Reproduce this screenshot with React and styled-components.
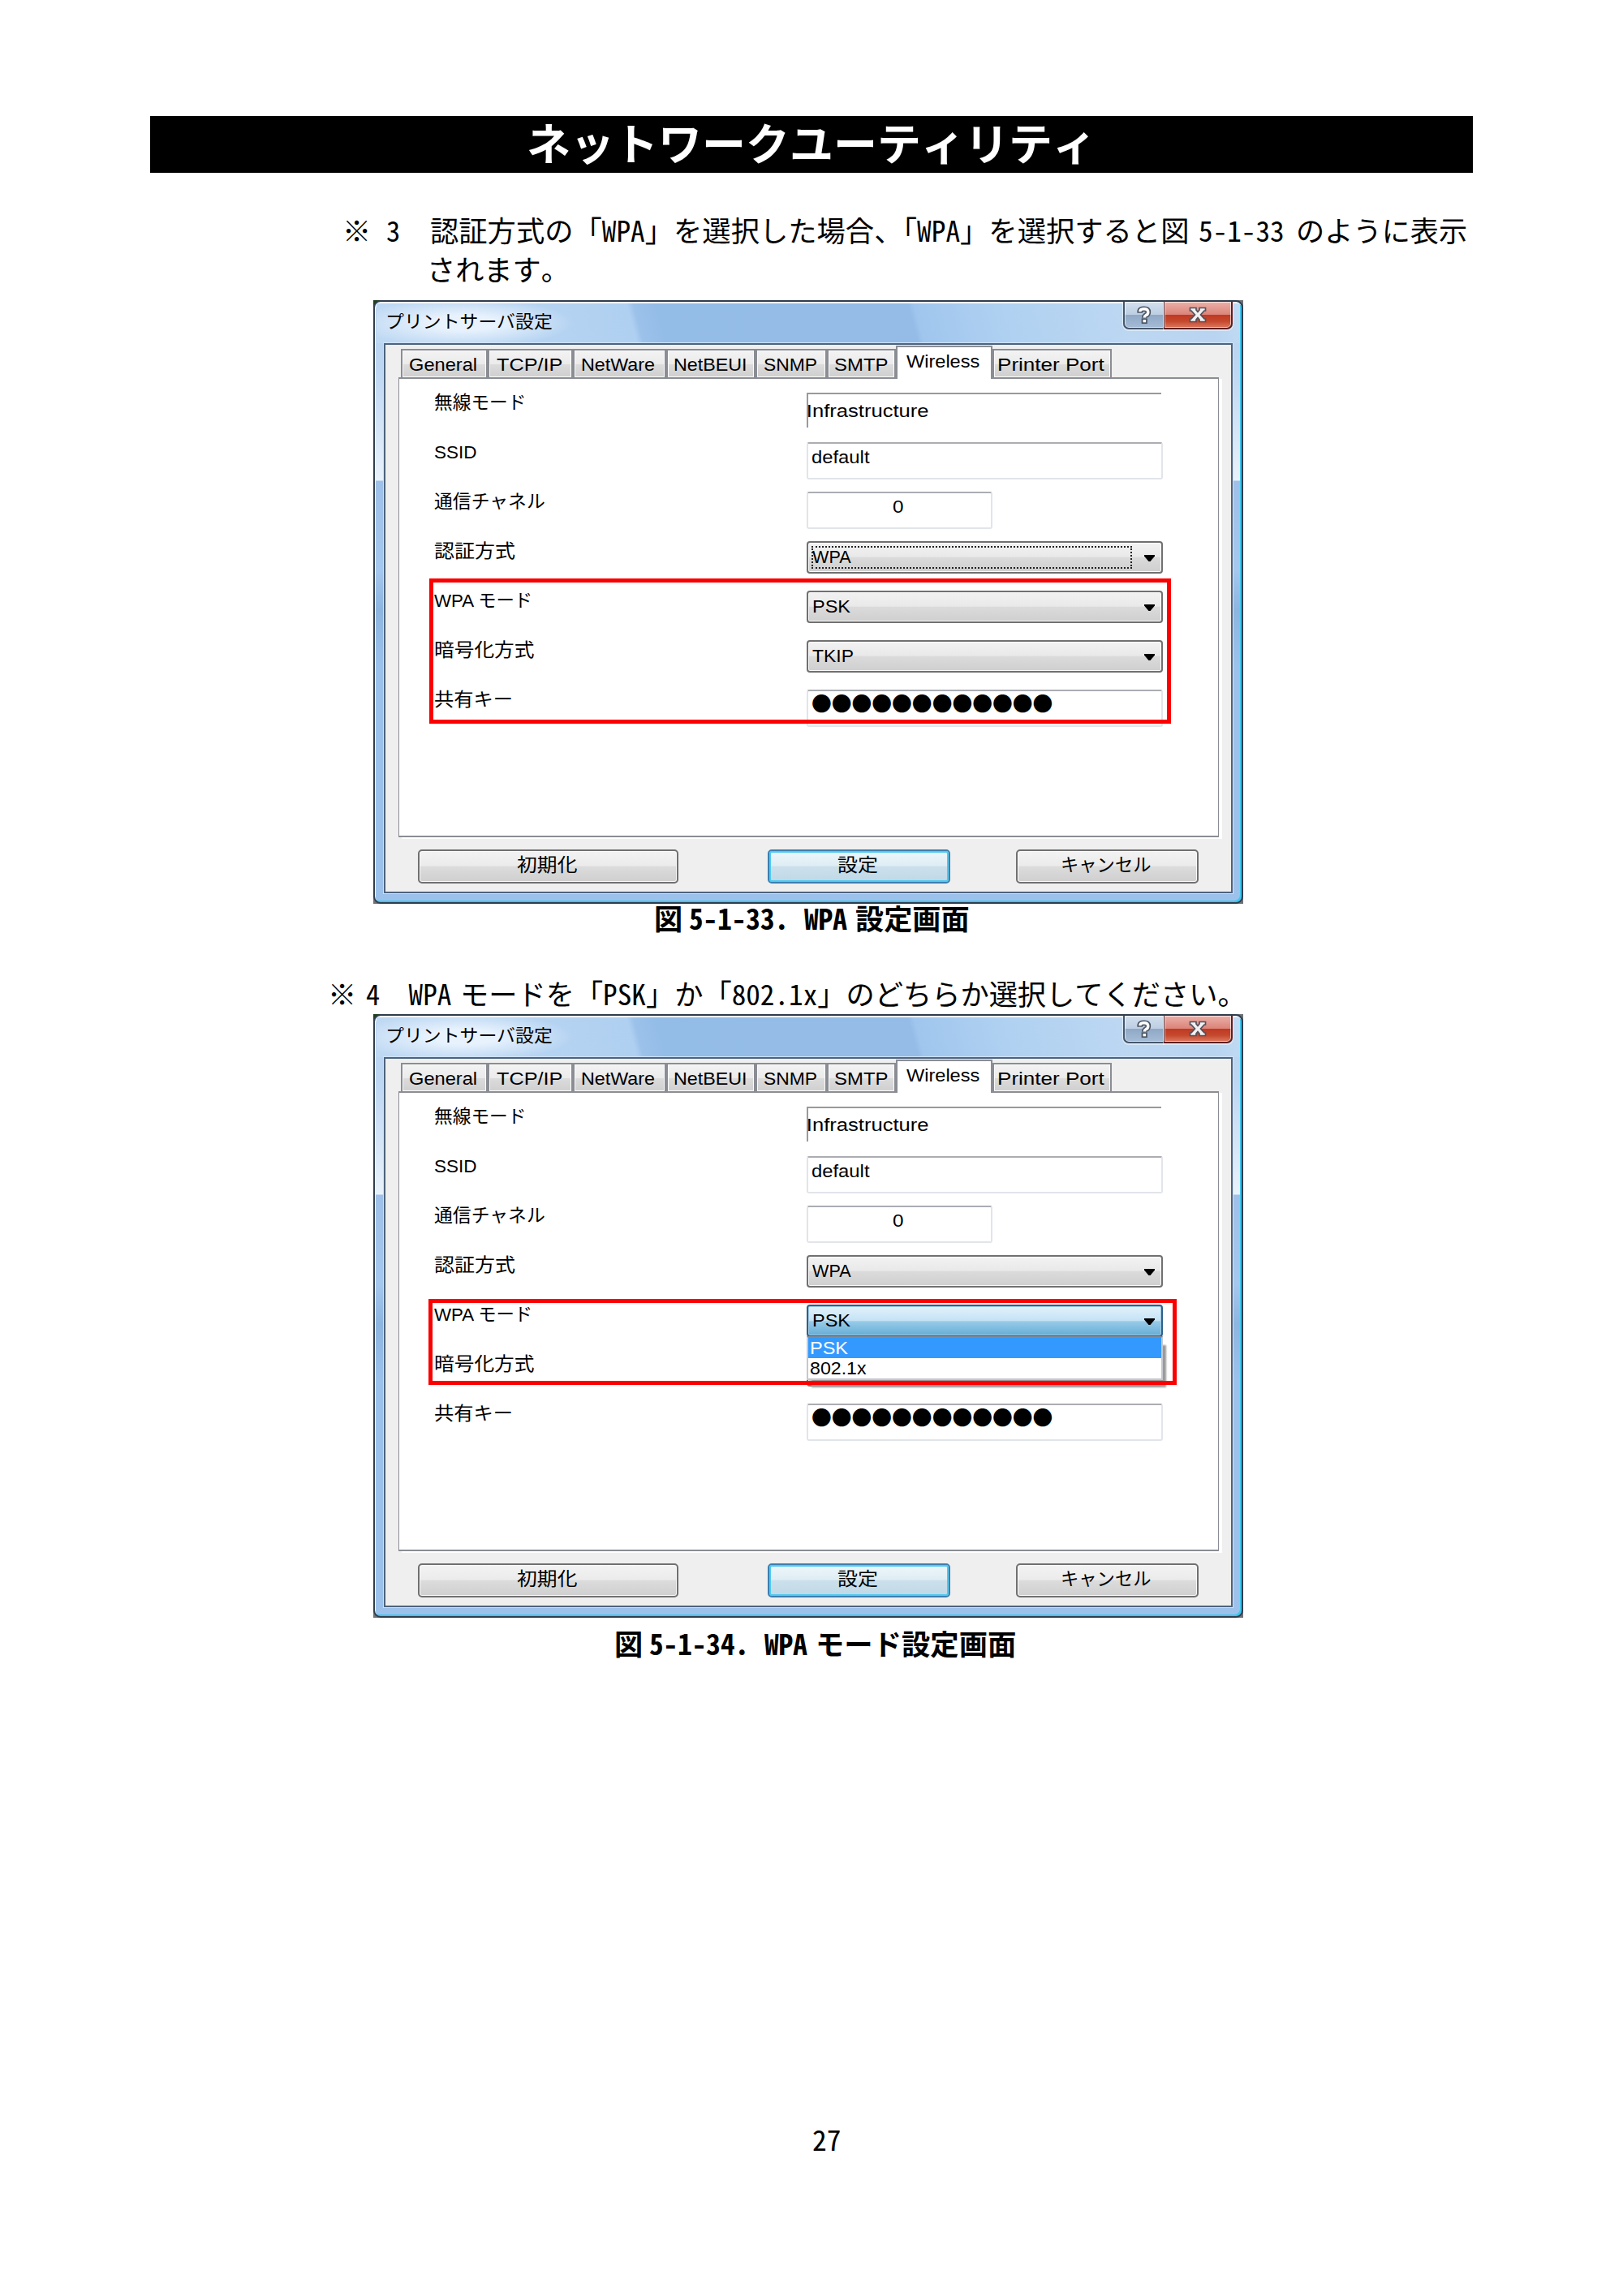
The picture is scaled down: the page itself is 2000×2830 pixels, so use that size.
import React, { useLayoutEffect, useRef, useState } from 'react';
import styled, { createGlobalStyle, css } from 'styled-components';

const GlobalStyle = createGlobalStyle`
  body { margin: 0; background: #fff; }
  *, *::before, *::after { box-sizing: border-box; }
`;

const manualFont = `"Noto Sans Mono CJK JP", "Noto Sans CJK JP", sans-serif`;
const uiFont = `"Liberation Sans", "Noto Sans CJK JP", sans-serif`;

/* ---------- text set to an exact measure ---------- */

const Measure = styled.span`
  display: block;
  flex: none;
  width: ${(p) => p.$width}px;
  margin-left: ${(p) => p.$gap || 0}px;
`;

const Stretch = styled.span`
  display: inline-block;
  white-space: pre;
  transform-origin: 0 50%;
`;

function Fit({ width, gap, children }) {
  const ref = useRef(null);
  const [scale, setScale] = useState(1);
  useLayoutEffect(() => {
    if (ref.current.offsetWidth) setScale(width / ref.current.offsetWidth);
  }, [width, children]);
  return (
    <Measure $width={width} $gap={gap}>
      <Stretch ref={ref} style={{ transform: `scaleX(${scale})` }}>{children}</Stretch>
    </Measure>
  );
}

/* ---------- manual page ---------- */

const Page = styled.main`
  width: 2000px;
  height: 2830px;
  padding-top: 143px;
  display: flex;
  flex-direction: column;
  background: #fff;
  color: #000;
  font-family: ${manualFont};
  font-size: 35.2px;
`;

const Banner = styled.h1`
  margin: 0 185px;
  height: 70px;
  display: flex;
  align-items: center;
  justify-content: center;
  background: #000;
  color: #fff;
  font-size: 54px;
  font-weight: 700;
  line-height: 64px;
  padding-bottom: 6px;
`;

const Line = styled.p`
  display: flex;
  margin: ${(p) => p.$top}px 0 0 ${(p) => p.$left}px;
  height: 48px;
  line-height: 41px;
  font-weight: ${(p) => (p.$bold ? 700 : 400)};
`;

const Folio = styled.footer`
  margin: auto 0 168px 1001px;
  height: 48px;
  line-height: 44px;
`;

/* ---------- dialog window ---------- */

const Frame = styled.section`
  flex: none;
  width: 1072px;
  height: 744px;
  margin: ${(p) => p.$top}px 0 0 460px;
  background: linear-gradient(100deg, #1d3f1d 0, #1d3f1d 20px, #6d7074 21px);
  font-family: ${uiFont};
  font-size: 22.5px;
  position: relative;
`;

const Shell = styled.div`
  width: 100%;
  height: 100%;
  border: 2px solid #2f3d4d;
  border-radius: 9px;
  padding: 2px 11px 11px;
  overflow: hidden;
  box-shadow: inset 1px 2px 0 #f1f8ff, inset -2px -2px 0 #3cc6f0;
  background:
    linear-gradient(#b9d3f0 0, #bdd6f2 80px, #e9f2fb 220px, #9fc0e8 221px, #a5c8ee 330px, #8db5e0 380px, #9cc2ec 450px, #9cc2ec 100%);
`;

const TitleBar = styled.header`
  height: 49px;
  margin: 0 -9px;
  padding: 0 9px 0 5px;
  display: flex;
  background:
    radial-gradient(ellipse 135px 30px at 108px 24px, rgba(240, 247, 255, .85) 30%, rgba(225, 239, 253, 0) 100%),
    linear-gradient(75deg, #bfd9f3 0, #b0d0f1 310px, #9cc2ea 318px, #93bce7 345px, #94bce7 500px, #94bce7 645px, #a0c6ee 652px, #b0d1f1 760px, #bcd7f2 900px, #b8d4f0 1000px, #c2dbf4 100%);
`;

const Title = styled.div`
  flex: 1;
  padding: 3px 0 0 6px;
  line-height: 34px;
  font-size: 22px;
  font-family: "Noto Sans CJK JP", sans-serif;
`;

const Caption = styled.div`
  width: ${(p) => p.$width}px;
  height: 34px;
  margin-top: -2px;
  display: flex;
  align-items: center;
  justify-content: center;
  border: 2px solid ${(p) => (p.$close ? '#5c1f22' : '#46566b')};
  border-top: 0;
  border-left-width: ${(p) => (p.$close ? 1 : 2)}px;
  border-right-width: ${(p) => (p.$close ? 2 : 0)}px;
  border-radius: ${(p) => (p.$close ? '0 0 7px 0' : '0 0 0 7px')};
  box-shadow: inset 0 0 0 1px rgba(255, 255, 255, .6), 0 1px 0 1px rgba(255, 255, 255, .45);
  background: ${(p) =>
    p.$close
      ? 'linear-gradient(#eab0a8 0, #dc8378 50%, #bf3a22 51%, #c5482d 75%, #dc7a60 100%)'
      : 'linear-gradient(#d3e0ef 0, #bccee2 50%, #8fa8c5 51%, #a5bcd6 100%)'};
`;

const Glyph = styled.svg`
  display: block;
`;

const Client = styled.div`
  height: 678px;
  border: 2px solid #4d637d;
  background: #efefef;
  padding: 1px 12px 0 16px;
  box-shadow: 0 0 0 1px #cfe3f8;
`;

const Tabs = styled.nav`
  display: flex;
  align-items: flex-end;
  height: 39px;
  padding-left: 3px;
`;

const Tab = styled.div`
  flex: none;
  width: ${(p) => p.$width}px;
  height: 35px;
  padding-left: ${(p) => p.$pad}px;
  line-height: 36px;
  border: 2px solid #8b8d94;
  border-bottom: 0;
  box-shadow: inset 0 0 0 1px #fbfbfb;
  background: linear-gradient(#f3f3f3 0, #ebebeb 50%, #dcdcdc 51%, #cfcfcf 100%);
  ${(p) =>
    p.$active &&
    css`
      height: 41px;
      margin-bottom: -2px;
      padding-bottom: 2px;
      background: #fff;
      box-shadow: none;
      line-height: 36px;
      position: relative;
    `}
`;

const Sheet = styled.div`
  width: 1011px;
  height: 567px;
  border: 2px solid #8b8d94;
  border-width: 2px 1.5px 2px 1px;
  background: #fff;
  box-shadow: 4px 2px 0 #fff;
  padding-top: 17px;
`;

const Row = styled.div`
  display: grid;
  grid-template-columns: 459px 439px;
  align-items: start;
  height: 61px;
  padding-left: 43px;
`;

const Label = styled.div`
  line-height: 25px;
`;

const fieldBase = css`
  display: flex;
  width: ${(p) => p.$width || 439}px;
  position: relative;
`;

const ReadOnly = styled.div`
  ${fieldBase}
  width: 437px;
  height: 43px;
  padding-top: 7px;
  line-height: 28px;
  border: solid #9a9a9c;
  border-width: 2px 0 0 2px;
  text-indent: -1px;
`;

const Input = styled.div`
  ${fieldBase}
  height: 46px;
  padding: 3px 0 0 ${(p) => p.$pad || 4}px;
  line-height: 28px;
  border: 2px solid #e1e5ea;
  border-top-color: #abadb3;
  border-radius: 3px;
`;

const Secret = styled.div`
  font-family: "Noto Sans CJK JP", sans-serif;
  font-size: 24.7px;
  line-height: 22px;
`;

const Select = styled.div`
  ${fieldBase}
  height: 40px;
  padding: 4px 8px 0 5px;
  line-height: 28px;
  justify-content: space-between;
  border: 2px solid ${(p) => (p.$open ? '#2f5f8b' : '#707070')};
  border-radius: 4px;
  box-shadow: inset 0 0 0 1px ${(p) => (p.$open ? '#9fc9e2' : '#f8f8f8')};
  background: ${(p) =>
    p.$open
      ? 'linear-gradient(#e3f2fb 0, #c3e2f5 50%, #98cbe8 52%, #66add6 100%)'
      : 'linear-gradient(#f2f2f2 0, #e9e9e9 48%, #dbdbdb 50%, #cfcfcf 100%)'};
`;

const Focus = styled.span`
  position: absolute;
  left: 4px;
  top: 4px;
  width: 395px;
  height: 28px;
  border: 2px dotted #222;
`;

const Arrow = styled.span`
  width: 13px;
  margin: 11px 0 0 auto;
  height: 8px;
  background: #000;
  clip-path: polygon(0 0, 100% 0, 100% 20%, 58% 100%, 42% 100%, 0 20%);
`;

const Menu = styled.div`
  position: absolute;
  left: 534px;
  top: 397px;
  width: 439px;
  height: 54px;
  border: 2px solid #c6c8d0;
  border-top-color: #848a92;
  background: #fff;
  box-shadow: 5px 10px 2px -1px #9a9a9a;
`;

const Option = styled.div`
  height: 25px;
  padding-left: 2px;
  line-height: 25px;
  background: ${(p) => (p.$on ? '#3399ff' : '#fff')};
  color: ${(p) => (p.$on ? '#fff' : '#000')};
`;

const Actions = styled.div`
  display: flex;
  padding: 15px 0 0 24px;
`;

const Button = styled.div`
  width: ${(p) => p.$width}px;
  height: 42px;
  margin-right: ${(p) => p.$after || 0}px;
  padding-right: 3px;
  display: flex;
  justify-content: center;
  line-height: 36px;
  border: 2px solid ${(p) => (p.$primary ? '#3c7fb1' : '#707070')};
  border-radius: 5px;
  box-shadow: inset 0 0 0 ${(p) => (p.$primary ? '2px #4fcaf0' : '1px #fafafa')};
  background: ${(p) =>
    p.$primary
      ? 'linear-gradient(#eef6fa 0, #deedf4 48%, #cbe0ec 50%, #c0d8e6 100%)'
      : 'linear-gradient(#f3f3f3 0, #ebebeb 48%, #dcdcdc 50%, #cfcfcf 100%)'};
`;

const RedBox = styled.div`
  position: absolute;
  left: ${(p) => p.$x}px;
  top: ${(p) => p.$y}px;
  width: ${(p) => p.$w}px;
  height: ${(p) => p.$h}px;
  border: 5px solid #fb0000;
`;

const tabs = [
  { text: 'General', width: 107, pad: 8, fit: 84 },
  { text: 'TCP/IP', width: 105, pad: 9, fit: 82 },
  { text: 'NetWare', width: 115, pad: 8, fit: 91 },
  { text: 'NetBEUI', width: 110, pad: 7, fit: 91 },
  { text: 'SNMP', width: 88, pad: 8, fit: 66 },
  { text: 'SMTP', width: 85, pad: 7, fit: 67 },
  { text: 'Wireless', width: 119, pad: 11, fit: 90, active: true },
  { text: 'Printer Port', width: 147, pad: 4, fit: 132 },
];

function Combo({ text, fit, focus, open }) {
  return (
    <Select $open={open}>
      {text && <Fit width={fit}>{text}</Fit>}
      <Arrow />
      {focus && <Focus />}
    </Select>
  );
}

function Field({ label, fit, children }) {
  return (
    <Row>
      <Label><Fit width={fit}>{label}</Fit></Label>
      {children}
    </Row>
  );
}

function Dialog({ top, focus, open, children }) {
  return (
    <Frame $top={top}>
      <Shell>
        <TitleBar>
          <Title><Fit width={206}>プリントサーバ設定</Fit></Title>
          <Caption $width={50}>
            <Glyph width="18" height="23" viewBox="0 0 18 24" fill="none">
              <path d="M3.500 9V6.500Q4 4 9 4t5 4q0 3-3 4.200Q9.300 13 9.300 15.500" stroke="#4c5563" strokeWidth="7" />
              <rect x="5.500" y="16" width="7.500" height="7" fill="#4c5563" />
              <path d="M3.700 7.500V6.500Q4 4 9 4t5 4q0 3-3 4.200Q9.300 13 9.300 15" stroke="#fff" strokeWidth="3.600" />
              <rect x="7.400" y="17.800" width="3.800" height="3.400" fill="#fff" />
            </Glyph>
          </Caption>
          <Caption $width={85} $close>
            <Glyph width="22" height="20" viewBox="0 0 22 20">
              <path
                d="M1.500 1.500h7.500v2.500L11 6.500 13 4V1.500h7.500V5H19L14.500 10 19 15h1.500v3.500H13V16l-2-2.500L9 16v2.500H1.500V15H3L7.500 10 3 5H1.500z"
                fill="#f1f1f1" stroke="#54505c" strokeWidth="1.700"
              />
            </Glyph>
          </Caption>
        </TitleBar>
        <Client>
          <Tabs>
            {tabs.map((t) => (
              <Tab key={t.text} $width={t.width} $pad={t.pad} $active={t.active}>
                <Fit width={t.fit}>{t.text}</Fit>
              </Tab>
            ))}
          </Tabs>
          <Sheet>
            <Field label="無線モード" fit={114}>
              <ReadOnly><Fit width={150}>Infrastructure</Fit></ReadOnly>
            </Field>
            <Field label="SSID" fit={53}>
              <Input><Fit width={72}>default</Fit></Input>
            </Field>
            <Field label="通信チャネル" fit={137}>
              <Input $width={229} $pad={104}><Fit width={14}>0</Fit></Input>
            </Field>
            <Field label="認証方式" fit={100}><Combo text="WPA" fit={48} focus={focus} /></Field>
            <Field label="WPA モード" fit={121}><Combo text="PSK" fit={47} open={open} /></Field>
            <Field label="暗号化方式" fit={124}><Combo text={open ? '' : 'TKIP'} fit={51} /></Field>
            <Field label="共有キー" fit={97}>
              <Input><Secret><Fit width={297}>●●●●●●●●●●●●</Fit></Secret></Input>
            </Field>
          </Sheet>
          <Actions>
            <Button $width={321} $after={110}><Fit width={75}>初期化</Fit></Button>
            <Button $width={225} $after={81} $primary><Fit width={50}>設定</Fit></Button>
            <Button $width={225}><Fit width={112}>キャンセル</Fit></Button>
          </Actions>
        </Client>
      </Shell>
      {children}
    </Frame>
  );
}

export default function App() {
  return (
    <Page>
      <GlobalStyle />
      <Banner>ネットワークユーティリティ</Banner>
      <Line $top={49} $left={422}>
        <Fit width={35}>※</Fit>
        <Fit width={17.6} gap={18.5}>3</Fit>
        <Fit width={935} gap={36.5}>認証方式の「WPA」を選択した場合、「WPA」を選択すると図</Fit>
        <Fit width={106} gap={12.5}>5-1-33</Fit>
        <Fit width={211} gap={14}>のように表示</Fit>
      </Line>
      <Line $top={0} $left={526}>
        <Fit width={176}>されます。</Fit>
      </Line>
      <Dialog top={12} focus>
        <RedBox $x={69} $y={343} $w={914} $h={179} />
      </Dialog>
      <Line $top={-4} $left={806} $bold>
        <Fit width={35}>図</Fit>
        <Fit width={123} gap={8}>5-1-33.</Fit>
        <Fit width={53} gap={19}>WPA</Fit>
        <Fit width={140.8} gap={10}>設定画面</Fit>
      </Line>
      <Line $top={45} $left={404}>
        <Fit width={35}>※</Fit>
        <Fit width={17.6} gap={12}>4</Fit>
        <Fit width={53} gap={35}>WPA</Fit>
        <Fit width={969} gap={10}>モードを「PSK」か「802.1x」のどちらか選択してください。</Fit>
      </Line>
      <Dialog top={-1} open>
        <Menu>
          <Option $on><Fit width={47}>PSK</Fit></Option>
          <Option><Fit width={70}>802.1x</Fit></Option>
        </Menu>
        <RedBox $x={68} $y={351} $w={922} $h={106} />
      </Dialog>
      <Line $top={10} $left={757} $bold>
        <Fit width={35}>図</Fit>
        <Fit width={123} gap={8}>5-1-34.</Fit>
        <Fit width={53} gap={19}>WPA</Fit>
        <Fit width={247} gap={10}>モード設定画面</Fit>
      </Line>
      <Folio><Fit width={35.2}>27</Fit></Folio>
    </Page>
  );
}
